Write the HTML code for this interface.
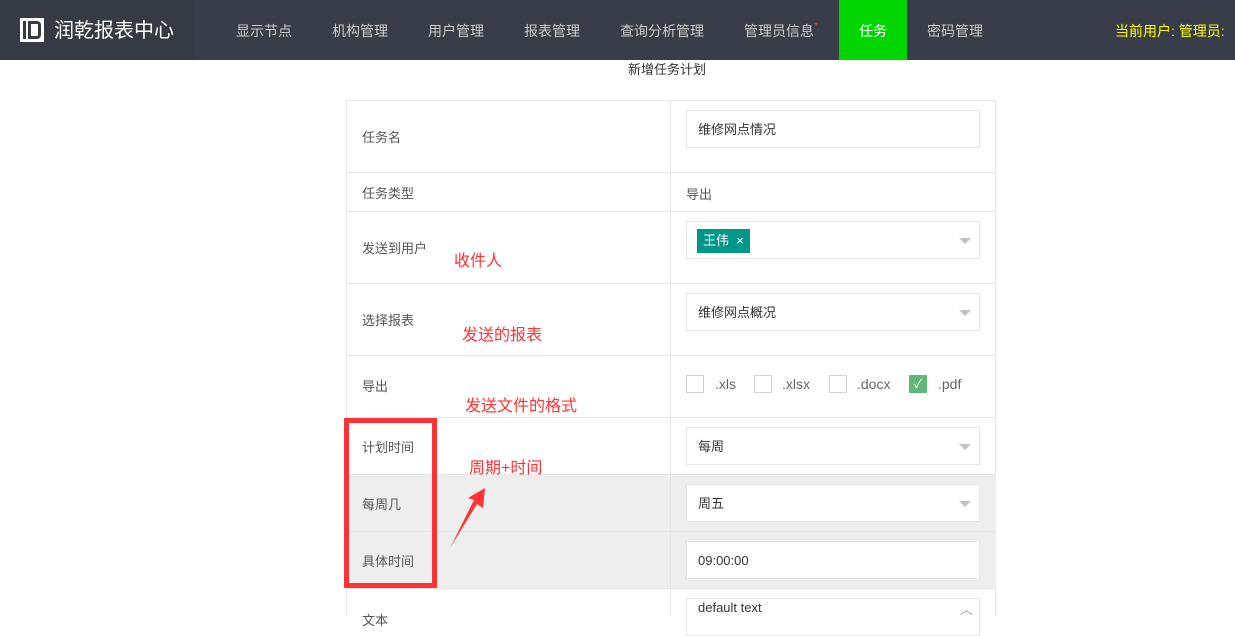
<!DOCTYPE html><html><head><meta charset="utf-8"><style>
*{margin:0;padding:0;box-sizing:border-box}
body{width:1235px;height:616px;overflow:hidden;background:#fff;font-family:"Liberation Sans","Noto Sans CJK SC",sans-serif;font-size:13px;color:#333;position:relative}
.hd{position:absolute;left:0;top:0;width:1235px;height:60px;background:#393d49}
.logo{position:absolute;left:0;top:0;width:195px;height:60px;background:#353a45;color:#fff;font-size:20px;line-height:62px;padding-left:54px}
.lg{position:absolute;left:20px;top:18px;width:24px;height:24px;background:#fff}
.nav{position:absolute;top:0;height:60px;line-height:63px;color:#ccc;font-size:14px}
.a{position:absolute}
.cell{position:absolute;border-top:1px solid #e6e6e6}
.lbl{position:absolute;left:362px;color:#555;font-size:13px}
.inp{position:absolute;left:686px;width:294px;height:38px;border:1px solid #e6e6e6;background:#fff;padding-left:11px;line-height:38px;color:#333;font-size:13px}
.tri{position:absolute;right:8px;top:16px;border:6px solid transparent;border-top-color:#c2c2c2}
.red{position:absolute;color:#f33;font-size:16px}
.cb{position:absolute;top:375px;width:18px;height:18px;border:1px solid #d2d2d2}
.cbl{position:absolute;top:376px;color:#666;font-size:14px}
</style></head><body>
<div class="hd">
<div class="logo"><div class="lg"><div style="position:absolute;left:3px;top:3px;width:3px;height:18px;background:#353a45"></div><div style="position:absolute;left:8px;top:3px;width:13px;height:18px;border:3px solid #353a45;border-left-width:3px;border-radius:0 4px 4px 0"></div></div>润乾报表中心</div>
<div class="nav" style="left:236px">显示节点</div>
<div class="nav" style="left:332px">机构管理</div>
<div class="nav" style="left:428px">用户管理</div>
<div class="nav" style="left:524px">报表管理</div>
<div class="nav" style="left:620px">查询分析管理</div>
<div class="nav" style="left:744px">管理员信息<span style="color:#f33;font-size:10px;vertical-align:top;position:relative;top:-5px">*</span></div>
<div class="nav" style="left:839px;width:68px;background:#01d601;color:#fff;text-align:center">任务</div>
<div class="nav" style="left:927px">密码管理</div>
<div class="nav" style="left:1115px;color:#ff0">当前用户: 管理员:</div>
</div>
<div class="a" style="left:628px;top:59px;font-size:13px;color:#333">新增任务计划</div>
<div class="a" style="left:346px;top:100px;width:650px;height:516px;border-left:1px solid #e6e6e6;border-right:1px solid #e6e6e6"></div>
<div class="a" style="left:346px;top:474px;width:650px;height:114px;background:#eee"></div>
<div class="a" style="left:670px;top:100px;width:1px;height:516px;background:#e6e6e6"></div>
<div class="cell" style="left:346px;top:100px;width:650px"></div>
<div class="cell" style="left:346px;top:172px;width:650px"></div>
<div class="cell" style="left:346px;top:211px;width:650px"></div>
<div class="cell" style="left:346px;top:283px;width:650px"></div>
<div class="cell" style="left:346px;top:355px;width:650px"></div>
<div class="cell" style="left:346px;top:417px;width:650px"></div>
<div class="cell" style="left:346px;top:474px;width:650px"></div>
<div class="cell" style="left:346px;top:531px;width:650px"></div>
<div class="cell" style="left:346px;top:588px;width:650px"></div>
<div class="lbl" style="top:127px">任务名</div>
<div class="lbl" style="top:183px">任务类型</div>
<div class="lbl" style="top:238px">发送到用户</div>
<div class="lbl" style="top:310px">选择报表</div>
<div class="lbl" style="top:376px">导出</div>
<div class="lbl" style="top:437px">计划时间</div>
<div class="lbl" style="top:494px">每周几</div>
<div class="lbl" style="top:551px">具体时间</div>
<div class="lbl" style="top:610px">文本</div>
<div class="inp" style="top:110px">维修网点情况</div>
<div class="a" style="left:686px;top:184px;color:#555">导出</div>
<div class="inp" style="top:221px"><span style="position:absolute;left:10px;top:7px;height:24px;line-height:24px;background:#009688;color:#fff;padding:0 6px;font-size:13px">王伟 &nbsp;×</span><div class="tri"></div></div>
<div class="inp" style="top:293px">维修网点概况<div class="tri"></div></div>
<div class="cb" style="left:686px"></div><div class="cbl" style="left:715px">.xls</div>
<div class="cb" style="left:754px"></div><div class="cbl" style="left:782px">.xlsx</div>
<div class="cb" style="left:829px"></div><div class="cbl" style="left:857px">.docx</div>
<div class="cb" style="left:909px;background:#5fb878;border-color:#5fb878;color:#fff;font-size:12px;text-align:center;line-height:16px">✓</div><div class="cbl" style="left:938px">.pdf</div>
<div class="inp" style="top:427px">每周<div class="tri"></div></div>
<div class="inp" style="top:484px">周五<div class="tri"></div></div>
<div class="inp" style="top:541px">09:00:00</div>
<div class="inp" style="top:598px;line-height:18px">default text<span style="position:absolute;right:6px;top:2px;color:#999">︿</span></div>
<div class="red" style="left:454px;top:247px">收件人</div>
<div class="red" style="left:462px;top:321px">发送的报表</div>
<div class="red" style="left:465px;top:392px">发送文件的格式</div>
<div class="red" style="left:469px;top:454px">周期+时间</div>
<div class="a" style="left:344px;top:418px;width:93px;height:170px;border:5px solid #f33"></div>
<svg class="a" style="left:440px;top:480px" width="60" height="75"><polygon points="10,68 34,20 28,18 45,8 43,28 37,24" fill="#f33"/></svg>
</body></html>
